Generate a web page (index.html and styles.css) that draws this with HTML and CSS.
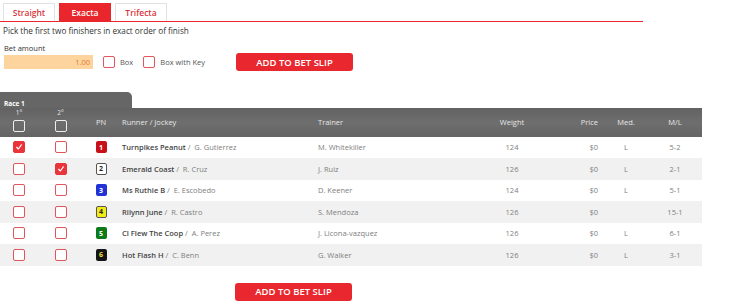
FILE: index.html
```html
<!DOCTYPE html>
<html>
<head>
<meta charset="utf-8">
<link rel="stylesheet" href="styles.css">
</head>
<body>
<div class="top">
  <div class="tabs">
    <div class="tab">Straight</div>
    <div class="tab active">Exacta</div>
    <div class="tab">Trifecta</div>
  </div>
  <p class="hint">Pick the first two finishers in exact order of finish</p>
  <div class="bet-label">Bet amount</div>
  <div class="bet-row">
    <div class="amount">1.00</div>
    <span class="cb"></span><span class="cb-label">Box</span>
    <span class="cb"></span><span class="cb-label">Box with Key</span>
    <button class="slip">ADD TO BET SLIP</button>
  </div>
</div>

<div class="race-tab">Race 1</div>
<div class="table">
  <div class="row head">
    <div class="c ctr"><span class="ord">1°</span><span class="hcb"></span></div>
    <div class="c ctr"><span class="ord">2°</span><span class="hcb"></span></div>
    <div class="c ctr">PN</div>
    <div class="c runner">Runner / Jockey</div>
    <div class="c trainer">Trainer</div>
    <div class="c ctr">Weight</div>
    <div class="c price">Price</div>
    <div class="c ctr">Med.</div>
    <div class="c ctr">M/L</div>
  </div>

  <div class="row">
    <div class="c ctr"><span class="cb on"><svg viewBox="0 0 12 12"><polyline points="3.2,6.3 5.2,8.4 8.8,3.4"/></svg></span></div>
    <div class="c ctr"><span class="cb"></span></div>
    <div class="c ctr"><span class="pn p1">1</span></div>
    <div class="c runner"><b>Turnpikes Peanut</b> / &nbsp;G. Gutierrez</div>
    <div class="c trainer">M. Whitekiller</div>
    <div class="c ctr">124</div>
    <div class="c price">$0</div>
    <div class="c ctr">L</div>
    <div class="c ctr">5-2</div>
  </div>

  <div class="row alt">
    <div class="c ctr"><span class="cb"></span></div>
    <div class="c ctr"><span class="cb on"><svg viewBox="0 0 12 12"><polyline points="3.2,6.3 5.2,8.4 8.8,3.4"/></svg></span></div>
    <div class="c ctr"><span class="pn p2">2</span></div>
    <div class="c runner"><b>Emerald Coast</b> / &nbsp;R. Cruz</div>
    <div class="c trainer">J. Ruiz</div>
    <div class="c ctr">126</div>
    <div class="c price">$0</div>
    <div class="c ctr">L</div>
    <div class="c ctr">2-1</div>
  </div>

  <div class="row">
    <div class="c ctr"><span class="cb"></span></div>
    <div class="c ctr"><span class="cb"></span></div>
    <div class="c ctr"><span class="pn p3">3</span></div>
    <div class="c runner"><b>Ms Ruthie B</b> / &nbsp;E. Escobedo</div>
    <div class="c trainer">D. Keener</div>
    <div class="c ctr">124</div>
    <div class="c price">$0</div>
    <div class="c ctr">L</div>
    <div class="c ctr">5-1</div>
  </div>

  <div class="row alt">
    <div class="c ctr"><span class="cb"></span></div>
    <div class="c ctr"><span class="cb"></span></div>
    <div class="c ctr"><span class="pn p4">4</span></div>
    <div class="c runner"><b>Rilynn June</b> / &nbsp;R. Castro</div>
    <div class="c trainer">S. Mendoza</div>
    <div class="c ctr">126</div>
    <div class="c price">$0</div>
    <div class="c ctr"></div>
    <div class="c ctr">15-1</div>
  </div>

  <div class="row">
    <div class="c ctr"><span class="cb"></span></div>
    <div class="c ctr"><span class="cb"></span></div>
    <div class="c ctr"><span class="pn p5">5</span></div>
    <div class="c runner"><b>Cl Flew The Coop</b> / &nbsp;A. Perez</div>
    <div class="c trainer">J. Licona-vazquez</div>
    <div class="c ctr">126</div>
    <div class="c price">$0</div>
    <div class="c ctr">L</div>
    <div class="c ctr">6-1</div>
  </div>

  <div class="row alt">
    <div class="c ctr"><span class="cb"></span></div>
    <div class="c ctr"><span class="cb"></span></div>
    <div class="c ctr"><span class="pn p6">6</span></div>
    <div class="c runner"><b>Hot Flash H</b> / &nbsp;C. Benn</div>
    <div class="c trainer">G. Walker</div>
    <div class="c ctr">126</div>
    <div class="c price">$0</div>
    <div class="c ctr">L</div>
    <div class="c ctr">3-1</div>
  </div>
</div>

<div class="bottom">
  <button class="slip">ADD TO BET SLIP</button>
</div>
</body>
</html>
```

FILE: styles.css
```css
* { box-sizing: border-box; }
html, body { margin: 0; padding: 0; background: #fff; }
body {
  font-family: "Open Sans", "Liberation Sans", sans-serif;
  font-size: 7.5px;
  color: #444;
  width: 740px;
}
.top { padding: 3px 0 0 0; }
.tabs {
  display: flex;
  gap: 4px;
  padding-left: 3px;
  width: 643px;
  border-bottom: 1.5px solid #e8262b;
}
.tab {
  width: 52px;
  height: 18px;
  border: 1px solid #e2e2e2;
  border-bottom: none;
  color: #d9363b;
  font-weight: 600;
  font-size: 8.5px;
  display: flex;
  align-items: center;
  justify-content: center;
}
.tab.active { background: #e8262b; border-color: #e8262b; color: #fff; }
.hint { margin: 0; padding: 4px 0 0 3px; line-height: 10px; color: #333; font-size: 8.2px; }
.bet-label { padding: 7px 0 0 4px; line-height: 10px; color: #333; }
.bet-row {
  display: flex;
  align-items: center;
  padding: 0 0 0 4px;
  height: 18px;
}
.amount {
  width: 89px;
  height: 14px;
  background: #fdd49d;
  color: #e27b2d;
  text-align: right;
  padding-right: 3px;
  line-height: 14px;
}
.cb {
  display: inline-flex;
  width: 12px;
  height: 12px;
  border: 1px solid #e0555a;
  border-radius: 2px;
  background: #fff;
}
.cb.on { background: #e8343a; border-color: #e8343a; }
.cb svg { width: 100%; height: 100%; }
.cb polyline { fill: none; stroke: #fff; stroke-width: 1.4; stroke-linecap: round; stroke-linejoin: round; }
.bet-row .cb { margin-left: 10px; }
.cb-label { margin-left: 5px; color: #555; }
.slip {
  width: 117px;
  height: 18px;
  border: none;
  border-radius: 3px;
  background: #e8282e;
  color: #fff;
  font-family: "Open Sans", "Liberation Sans", sans-serif;
  font-weight: 600;
  font-size: 9.5px;
  padding: 0;
}
.bet-row .slip { margin-left: 31px; }

.race-tab {
  margin-top: 20.5px;
  width: 132px;
  height: 16px;
  background: #666;
  border-top-right-radius: 5px;
  color: #fff;
  font-weight: 700;
  font-size: 6.5px;
  padding: 8px 0 0 4px;
  line-height: 8px;
}
.table { width: 702px; }
.row {
  display: grid;
  grid-template-columns: 38px 45px 36px 197px 160px 72px 56px 44px 54px;
  height: 21.5px;
  align-items: center;
  color: #808080;
}
.row.alt { background: #f1f1f1; }
.row.head {
  height: 29px;
  background: linear-gradient(#626262, #6e6e6e 50%, #646464);
  color: #e6e6e6;
}
.c { white-space: nowrap; }
.ctr { text-align: center; display: flex; justify-content: center; align-items: center; }
.head .ctr { flex-direction: column; }
.ord { font-size: 6.5px; line-height: 8px; margin-top: -3px; }
.hcb {
  display: block;
  width: 12px;
  height: 12px;
  border: 1px solid #eee;
  border-radius: 2px;
  margin-top: 3px;
}
.runner { padding-left: 3px; }
.runner b { font-weight: 600; color: #444; }
.trainer { padding-left: 2px; }
.price { text-align: right; padding-right: 6px; }
.pn {
  display: inline-flex;
  width: 11px;
  height: 12px;
  border-radius: 2px;
  align-items: center;
  justify-content: center;
  font-weight: 700;
  font-size: 7px;
  color: #fff;
}
.p1 { background: #c8101a; }
.p2 { background: #fff; border: 1px solid #555; color: #222; }
.p3 { background: #2233d6; }
.p4 { background: #f2ea16; border: 1px solid #555; color: #222; }
.p5 { background: #0c7a18; }
.p6 { background: #151515; color: #f3e33a; }

.bottom { padding: 17px 0 0 235px; }
```
